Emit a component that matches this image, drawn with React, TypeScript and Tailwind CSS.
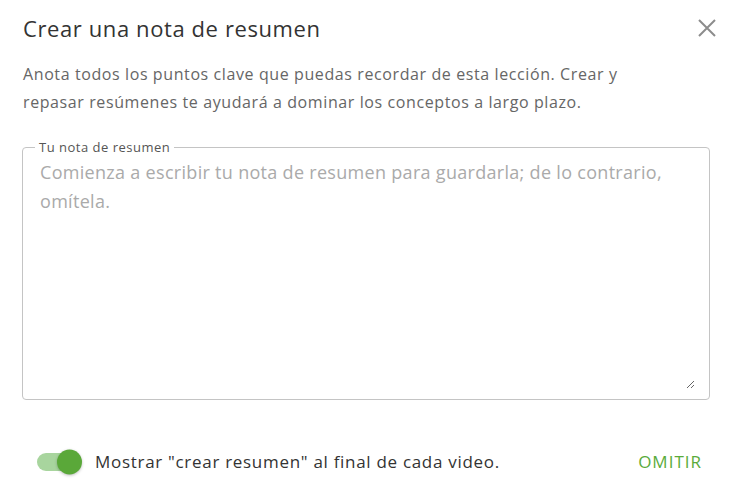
export default function App() {
  return (
    <div className="w-[732px] h-[497px] bg-white font-['Open_Sans','Noto_Sans',sans-serif]">
      <div className="px-[23px] pt-[12px]">
        <div className="flex items-center justify-between h-[32px]">
          <h2 className="text-[22px] tracking-[0.6px] text-[#333333] leading-[32px]">Crear una nota de resumen</h2>
          <button className="text-[#8c8c8c] -mr-[7px]">
            <svg width="18" height="18" viewBox="0 0 18 18" fill="none" stroke="currentColor" strokeWidth="2">
              <path d="M1 1L17 17M17 1L1 17" />
            </svg>
          </button>
        </div>
        <p className="mt-[16px] max-w-[640px] text-[16px] tracking-[0.6px] leading-[28px] text-[#666666]">
          Anota todos los puntos clave que puedas recordar de esta lección. Crear y repasar resúmenes te
          ayudará a dominar los conceptos a largo plazo.
        </p>
        <fieldset className="mt-[24px] border border-[#c4c4c4] rounded-[4px] pl-[17px] pr-[14px] pb-[10px] -mx-px">
          <legend className="ml-[-5px] px-[4px] text-[13px] tracking-[0.5px] leading-[14px] text-[#555555]">Tu nota de resumen</legend>
          <textarea
            className="block w-full h-[231px] resize-y outline-none text-[18px] tracking-[0.3px] leading-[29px] text-[#333] placeholder:text-[#aaaaaa] mt-[4px]"
            placeholder="Comienza a escribir tu nota de resumen para guardarla; de lo contrario, omítela."
          />
        </fieldset>
        <div className="mt-[49px] flex items-center justify-between pl-[14px] pr-[7px]">
          <div className="flex items-center gap-[20px]">
            <div className="relative w-[38px] h-[18px] rounded-full bg-[#a8d59e]">
              <div className="absolute right-[-7px] top-1/2 -translate-y-1/2 w-[25px] h-[25px] rounded-full bg-[#5aa839] shadow-[0_1px_3px_rgba(0,0,0,0.25)]" />
            </div>
            <span className="text-[17px] tracking-[0.7px] text-[#333333]">Mostrar "crear resumen" al final de cada video.</span>
          </div>
          <button className="text-[17px] font-medium tracking-[1px] text-[#5aab3a]">OMITIR</button>
        </div>
      </div>
    </div>
  );
}
